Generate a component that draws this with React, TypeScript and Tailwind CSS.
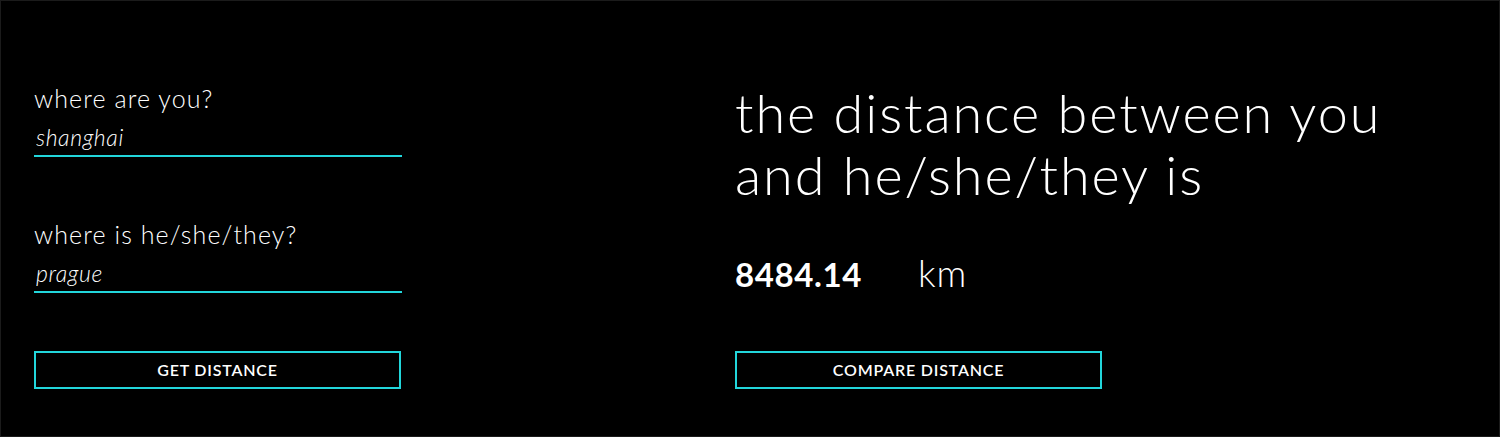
import React from "react";

const font = "font-['Lato','Open_Sans',sans-serif]";

function Field({ label, value, first }: { label: string; value: string; first?: boolean }) {
  return (
    <div className={first ? "" : "mt-[62px]"}>
      <label className="block text-[25px] font-light leading-[30px] tracking-[1.1px]">{label}</label>
      <input
        type="text"
        defaultValue={value}
        className={`block h-[44px] w-[368px] border-b-2 border-[#22d6db] bg-transparent px-[2px] pt-[6px] text-[23px] font-light italic tracking-[0.6px] text-white outline-none ${font}`}
      />
    </div>
  );
}

function OutlineButton({ children }: { children: React.ReactNode }) {
  return (
    <button
      type="button"
      className={`mt-[58px] flex h-[38px] w-[367px] items-center justify-center border-2 border-[#22d6db] bg-black text-[16px] font-semibold uppercase tracking-[0.8px] text-white ${font}`}
    >
      {children}
    </button>
  );
}

export default function App() {
  return (
    <div className={`h-[437px] w-[1500px] border border-[#1b1b1b] bg-black text-white ${font}`}>
      <div className="grid grid-cols-[701px_1fr] px-[33px]">
        {/* inputs */}
        <div className="pt-[82px]">
          <Field label="where are you?" value="shanghai" first />
          <Field label="where is he/she/they?" value="prague" />
          <OutlineButton>Get distance</OutlineButton>
        </div>

        {/* result */}
        <div className="pt-[81px]">
          <h1 className="text-[54px] font-light leading-[62px] tracking-[1.9px]">
            the distance between you
            <br />
            and he/she/they is
          </h1>
          <div className="mt-[47px] flex items-baseline">
            <span className="w-[183px] text-[33px] font-bold leading-[40px] tracking-[0.6px]">8484.14</span>
            <span className="text-[37px] font-light leading-[40px] tracking-[1px]">km</span>
          </div>
          <div className="mt-[-1px]">
            <OutlineButton>Compare distance</OutlineButton>
          </div>
        </div>
      </div>
    </div>
  );
}
